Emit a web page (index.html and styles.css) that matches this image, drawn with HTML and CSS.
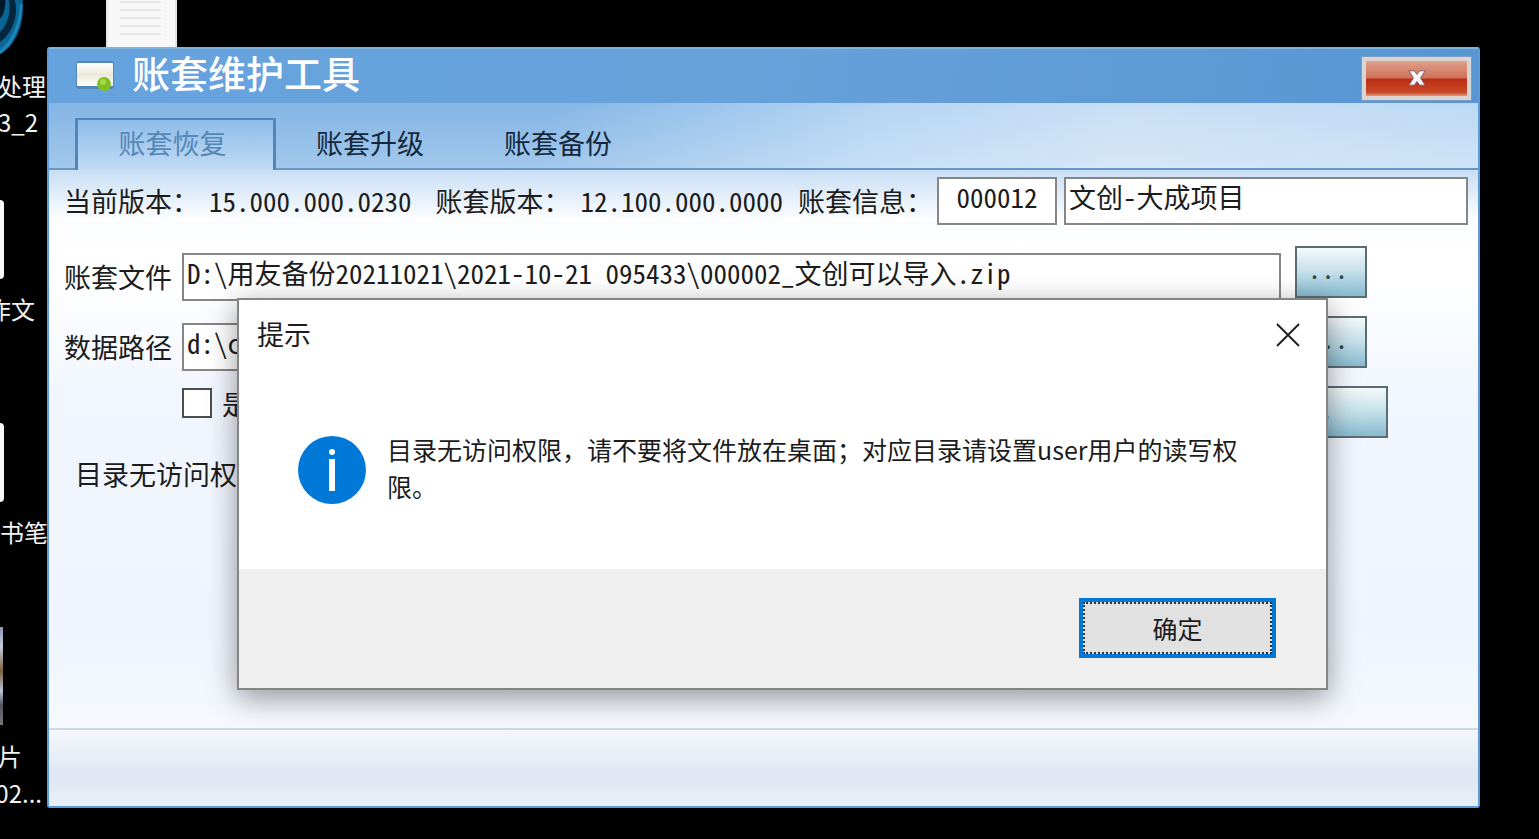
FILE: index.html
```html
<!DOCTYPE html>
<html lang="zh-CN">
<head>
    <meta charset="UTF-8">
    <meta name="viewport" content="width=device-width, initial-scale=1.0">
    <title>账套维护工具</title>
    <link rel="stylesheet" href="styles.css">
</head>
<body>
    <!-- Desktop shortcuts -->
    <svg class="globe-icon" width="24" height="60" viewBox="0 0 24 60" aria-hidden="true">
        <ellipse cx="-14" cy="8" rx="37" ry="50" fill="#0b6496"/>
        <path d="M14 -2C20 14 12 34 0 42V32C8 24 12 10 8 -2Z" fill="#03263f"/>
        <path d="M-2 20C4 16 6 8 5 -2H0V12Z" fill="#021a2c"/>
        <path d="M22 4C22 28 12 46 0 54V50C12 40 19 24 20 4Z" fill="#1a86ba"/>
    </svg>
    <svg class="document-icon" width="71" height="48" viewBox="0 0 71 48" aria-hidden="true">
        <rect width="71" height="48" fill="#f7f7f7"/>
        <path d="M14 2H55M14 10H55M14 18H55M14 26H55M14 34H55" stroke="#e6e6e6" stroke-width="2"/>
        <path d="M1 0V48M70 0V48" stroke="#d8d5d2" stroke-width="1"/>
    </svg>
    <div class="shortcut shortcut-1"><span>处理</span><span class="second-line">3_2</span></div>
    <div class="tile tile-1"></div>
    <div class="shortcut shortcut-2"><span>作文</span></div>
    <div class="tile tile-2"></div>
    <div class="shortcut shortcut-3"><span>书笔</span></div>
    <div class="tile tile-photo"></div>
    <div class="shortcut shortcut-4"><span>片</span></div>
    <div class="shortcut shortcut-5"><span>02...</span></div>

    <main class="window">
        <header class="titlebar">
            <svg class="app-icon" width="40" height="34" viewBox="0 0 40 34" aria-hidden="true">
                <defs>
                    <linearGradient id="card" x1="0" y1="0" x2="0" y2="1">
                        <stop offset="0" stop-color="#ffffff"/>
                        <stop offset="0.5" stop-color="#ece9da"/>
                        <stop offset="1" stop-color="#ffffff"/>
                    </linearGradient>
                </defs>
                <rect x="1" y="2" width="38" height="28" rx="3" fill="#5288b8"/>
                <rect x="2" y="4" width="36" height="23" rx="1" fill="url(#card)"/>
                <circle cx="29" cy="25" r="7" fill="#7fbf1e"/>
                <circle cx="28" cy="23" r="3" fill="#a5d84a"/>
            </svg>
            <h1>账套维护工具</h1>
            <button type="button" class="window-close" aria-label="关闭">
                <svg width="18" height="18" viewBox="0 0 20 20" aria-hidden="true">
                    <path d="M1 2H7L10 6L13 2H19L14 10L19 18H13L10 14L7 18H1L6 10Z" fill="#f4f6fa" stroke="#7d5560" stroke-width="1"/>
                </svg>
            </button>
        </header>

        <nav class="tabs">
            <button type="button" class="tab active">账套恢复</button>
            <button type="button" class="tab">账套升级</button>
            <button type="button" class="tab">账套备份</button>
        </nav>

        <form class="content">
            <div class="info-row">
                <span>当前版本：</span>
                <span class="value current">15.000.000.0230</span>
                <span>账套版本：</span>
                <span class="value">12.100.000.0000</span>
                <label for="account-code">账套信息：</label>
                <input type="text" id="account-code" class="code" value="000012">
                <input type="text" class="name" value="文创-大成项目" aria-label="账套名称">
            </div>
            <div class="field-row">
                <label for="account-file">账套文件</label>
                <input type="text" id="account-file" value="D:\用友备份20211021\2021-10-21 095433\000002_文创可以导入.zip">
                <button type="button" class="browse">...</button>
            </div>
            <div class="field-row">
                <label for="data-path">数据路径</label>
                <input type="text" id="data-path" value="d:\c">
                <button type="button" class="browse">...</button>
            </div>
            <div class="option-row">
                <input type="checkbox" id="option">
                <label for="option">是</label>
                <button type="button" class="browse wide">...</button>
            </div>
            <p class="status">目录无访问权</p>
        </form>

        <footer class="statusbar"></footer>
    </main>

    <section class="dialog" role="dialog" aria-labelledby="dialog-title">
        <header class="dialog-header">
            <h2 id="dialog-title">提示</h2>
            <button type="button" class="dialog-close" aria-label="关闭">
                <svg width="24" height="24" viewBox="0 0 24 24" aria-hidden="true">
                    <path d="M1 1L23 23M23 1L1 23" stroke="#222" stroke-width="2"/>
                </svg>
            </button>
        </header>
        <div class="dialog-body">
            <svg class="info-icon" width="70" height="70" viewBox="0 0 70 70" aria-hidden="true">
                <circle cx="35" cy="35" r="34" fill="#0078d7"/>
                <circle cx="35" cy="17" r="3" fill="#fff"/>
                <rect x="32" y="24" width="6" height="32" fill="#fff"/>
            </svg>
            <p>目录无访问权限，请不要将文件放在桌面；对应目录请设置user用户的读写权限。</p>
        </div>
        <footer class="dialog-footer">
            <button type="button" class="confirm"><span>确定</span></button>
        </footer>
    </section>
</body>
</html>
```

FILE: styles.css
```css
* {
    box-sizing: border-box;
}
body {
    margin: 0;
    min-height: 100vh;
    position: relative;
    overflow: hidden;
    background: #000;
    color: #1c1c1c;
    font-family: "Noto Sans CJK SC", sans-serif;
    font-size: 27px;
    line-height: 36px;
}
h1, h2, p {
    margin: 0;
    font-weight: normal;
}
button, input {
    font: inherit;
    color: inherit;
    border-radius: 0;
}

/* Desktop */
.globe-icon {
    position: absolute;
    left: 0;
    top: 0;
}
.document-icon {
    position: absolute;
    left: 106px;
    top: 0;
}
.shortcut {
    position: absolute;
    left: 0;
    display: flex;
    flex-direction: column;
    align-items: flex-end;
    color: #f2f2f2;
    font-size: 24px;
    white-space: nowrap;
}
.shortcut-1 {
    top: 68px;
    width: 46px;
}
.shortcut-2 {
    top: 291px;
    width: 35px;
}
.shortcut-3 {
    top: 514px;
    width: 48px;
}
.shortcut-4 {
    top: 738px;
    width: 22px;
}
.shortcut-5 {
    top: 775px;
    width: 42px;
}
.second-line {
    padding-right: 8px;
}
.tile {
    position: absolute;
    left: 0;
    width: 4px;
    height: 79px;
    background: #f8f8f8;
    border-radius: 0 4px 4px 0;
}
.tile-1 {
    top: 200px;
}
.tile-2 {
    top: 423px;
}
.tile-photo {
    top: 627px;
    width: 3px;
    height: 98px;
    border-radius: 0;
    background: linear-gradient(#8a93a8, #c3cde0 20%, #7a6038 45%, #b9c3d8 65%, #55555c 80%, #77777c);
}

/* Main window */
.window {
    position: absolute;
    top: 47px;
    right: 59px;
    bottom: 31px;
    left: 47px;
    display: flex;
    flex-direction: column;
    border: 2px solid #5b9bdc;
    border-top-color: #7fb4de;
    border-radius: 3px;
    background: #f1f6fe;
}
.titlebar {
    display: flex;
    align-items: center;
    height: 54px;
    padding: 0 6px 0 26px;
    background: linear-gradient(100deg, #66a3de, #67a1da 50%, #5795d3);
    color: #fff;
}
.titlebar h1 {
    flex: 1;
    padding: 0 0 8px 17px;
    font-size: 38px;
    font-weight: 500;
    line-height: 48px;
}
.window-close {
    display: flex;
    align-items: center;
    justify-content: center;
    width: 111px;
    height: 45px;
    margin-top: 4px;
    padding: 0;
    border: 5px solid #d9d5d3;
    outline: 1px solid #7f9bc0;
    outline-offset: -1px;
    background: linear-gradient(#dfa08c, #cf7159 48%, #b92c12 52%, #cb4a2a 90%, #e09a80);
}
.tabs {
    display: flex;
    align-items: flex-end;
    height: 67px;
    padding-left: 26px;
    border-bottom: 2px solid #6795c6;
    background: linear-gradient(rgba(255, 255, 255, 0), rgba(255, 255, 255, 0.25)), linear-gradient(95deg, #83b5e5 35%, #b5d5f2 58%, #c8dff5 75%, #bdd9f3);
}
.tab {
    width: 188px;
    height: 50px;
    padding: 0;
    border: 0;
    background: none;
    color: #14283c;
}
.tab.active {
    width: 201px;
    height: 52px;
    margin-bottom: -2px;
    padding: 0 6px 4px 0;
    border: solid #4e86c0;
    border-width: 2px 3px 0;
    background: linear-gradient(#8dbce9, #c2dbf4);
    color: #5587b5;
}
.content {
    flex: 1;
    padding: 7px 10px 0 15px;
    background: linear-gradient(#c8def4, #fdfeff 50px, #fff 110px, #f2f6fe 220px, #eff5fe 460px, #f6f9fe);
}
.info-row, .field-row, .option-row {
    display: flex;
}
.content input[type="text"] {
    height: 48px;
    min-width: 0;
    padding: 0 3px 10px;
    border: 2px solid #868686;
    background: #fff;
}
.content input[type="text"], .value, .browse {
    font-feature-settings: "hwid";
}
.info-row {
    align-items: center;
    margin-bottom: 21px;
    white-space: nowrap;
}
.value {
    padding: 0 15px 0 10px;
}
.value.current {
    padding-right: 24px;
}
.info-row .code {
    width: 120px;
    margin: 0 7px 0 4px;
    text-align: center;
}
.info-row .name {
    flex: 1;
}
.field-row {
    height: 55px;
    margin-bottom: 15px;
    padding-right: 101px;
}
.field-row label {
    width: 118px;
    padding-top: 13px;
}
.field-row input {
    flex: 1;
    align-self: flex-end;
}
.browse {
    width: 72px;
    height: 52px;
    margin-left: 14px;
    padding: 0 6px 8px 0;
    border: 2px solid #5b6c75;
    background: linear-gradient(#f4f9fb, #c4dfe9 50%, #87bbd0);
    color: #33474f;
}
.option-row {
    padding: 0 80px 0 118px;
}
.option-row input {
    appearance: none;
    width: 30px;
    height: 30px;
    margin: 2px 10px 0 0;
    border: 2px solid #4d4d4d;
    background: #fff;
}
.browse.wide {
    width: 150px;
    margin-left: auto;
    padding-right: 0;
}
.status {
    padding: 18px 11px;
}
.statusbar {
    height: 78px;
    border-top: 2px solid #ccd8e6;
    background: linear-gradient(#f3f7fd, #e0e7f2 60%, #e9eff8);
}

/* Message box */
.dialog {
    position: absolute;
    top: 298px;
    right: 211px;
    left: 237px;
    border: 2px solid #858585;
    background: #fff;
    box-shadow: 0 8px 28px rgba(0, 0, 0, 0.4);
}
.dialog-header {
    display: flex;
    align-items: center;
    justify-content: space-between;
    height: 70px;
    padding: 0 26px 0 18px;
}
.dialog-header h2 {
    padding-bottom: 3px;
    font-size: 27px;
}
.dialog-close {
    display: flex;
    padding: 0;
    border: 0;
    background: none;
}
.dialog-body {
    display: flex;
    align-items: center;
    height: 199px;
    padding: 0 70px 0 58px;
}
.dialog-body p {
    flex: 1;
    padding: 0 0 4px 20px;
    font-size: 25px;
    line-height: 37px;
}
.info-icon {
    flex: none;
}
.dialog-footer {
    display: flex;
    justify-content: flex-end;
    padding: 29px 50px 30px;
    background: #efefef;
}
.confirm {
    width: 197px;
    height: 60px;
    padding: 0;
    border: 4px solid #0078d7;
    background: #e1e1e1;
    font-size: 25px;
}
.confirm span {
    display: flex;
    align-items: center;
    justify-content: center;
    height: 100%;
    border: 2px dotted #333;
}
```
